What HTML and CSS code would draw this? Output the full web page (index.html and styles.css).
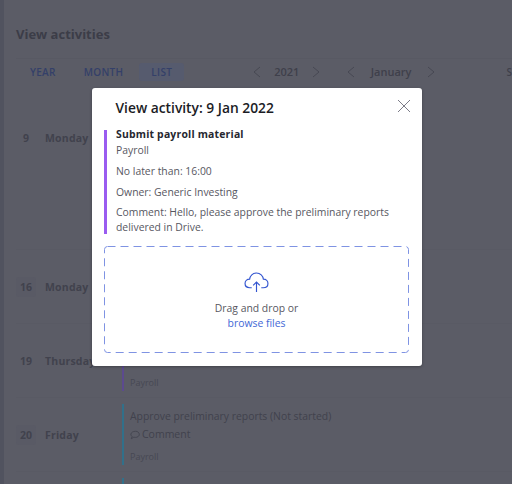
FILE: index.html
```html
<!DOCTYPE html>
<html lang="en">
<head>
    <meta charset="UTF-8">
    <meta name="viewport" content="width=device-width, initial-scale=1.0">
    <title>View activities</title>
    <link rel="stylesheet" href="styles.css">
</head>
<body>
    <div class="page">
        <h1 class="page-title">View activities</h1>

        <div class="toolbar">
            <div class="tabs">
                <span class="tab">YEAR</span>
                <span class="tab">MONTH</span>
                <span class="tab tab-active">LIST</span>
            </div>
            <div class="stepper stepper-year">
                <svg class="chev" viewBox="0 0 8 12"><path d="M7 1 1 6l6 5"/></svg>
                <span>2021</span>
                <svg class="chev" viewBox="0 0 8 12"><path d="M1 1l6 5-6 5"/></svg>
            </div>
            <div class="stepper stepper-month">
                <svg class="chev" viewBox="0 0 8 12"><path d="M7 1 1 6l6 5"/></svg>
                <span>January</span>
                <svg class="chev" viewBox="0 0 8 12"><path d="M1 1l6 5-6 5"/></svg>
            </div>
            <span class="toolbar-end">S</span>
        </div>

        <div class="row row-first">
            <span class="day-num">9</span>
            <span class="day-name">Monday</span>
        </div>
        <div class="row">
            <span class="day-num day-box">16</span>
            <span class="day-name">Monday</span>
        </div>
        <div class="row">
            <span class="day-num">19</span>
            <span class="day-name">Thursday</span>
            <div class="activity purple">
                <span class="act-tag">Payroll</span>
            </div>
        </div>
        <div class="row">
            <span class="day-num day-box">20</span>
            <span class="day-name">Friday</span>
            <div class="activity teal">
                <span class="act-title">Approve preliminary reports (Not started)</span>
                <span class="act-comment">
                    <svg class="comment-icon" viewBox="0 0 12 12"><path d="M6.500 1.500c2.600 0 4.700 1.600 4.700 3.700S9.100 8.900 6.500 8.900c-.7 0-1.300-.1-1.900-.3L1.500 10.500l1-2.800C1.600 7 1 6.100 1 5.200 1 3.100 3.900 1.500 6.500 1.500z"/></svg>
                    Comment
                </span>
                <span class="act-tag">Payroll</span>
            </div>
        </div>
        <div class="row">
            <span class="day-num"></span>
            <span class="day-name"></span>
            <div class="activity teal"></div>
        </div>
    </div>

    <div class="modal">
        <div class="modal-head">
            <h2>View activity: 9 Jan 2022</h2>
            <svg class="close" viewBox="0 0 14 14"><path d="M1 1l12 12M13 1 1 13"/></svg>
        </div>
        <div class="details">
            <div class="details-title">Submit payroll material</div>
            <div class="details-tag">Payroll</div>
            <p>No later than: 16:00</p>
            <p>Owner: Generic Investing</p>
            <p class="details-comment">Comment: Hello, please approve the preliminary reports delivered in Drive.</p>
        </div>
        <div class="dropzone">
            <svg class="dash" width="305" height="107"><rect x=".5" y=".5" width="304" height="106" rx="3"/></svg>
            <svg class="cloud" viewBox="0 0 26 22"><path d="M8 16.500H6C3 16.500 1 14.500 1 12s2-4.500 4.800-4.500C6.200 4 9 1 13 1s6.800 3 7.200 6.500C23 7.500 25 9.500 25 12s-2 4.500-5 4.500h-2"/><path d="M13 21V10.500M9.500 14l3.500-3.500 3.500 3.500"/></svg>
            <div>Drag and drop or</div>
            <a class="browse" href="#">browse files</a>
        </div>
    </div>
</body>
</html>
```

FILE: styles.css
```css
html, body {
    margin: 0;
    padding: 0;
}

body {
    width: 512px;
    height: 484px;
    overflow: hidden;
    position: relative;
    background-color: #5b5c66;
    font-family: "Open Sans", "Noto Sans", sans-serif;
    color: #3d3e49;
}

.page {
    height: 484px;
    overflow: hidden;
    box-sizing: border-box;
    padding-left: 12px;
    border-left: 4px solid #51535f;
}

.page-title {
    margin: 0;
    padding-top: 25px;
    font-size: 13px;
    line-height: 19px;
    font-weight: 700;
    color: #3c3d48;
}

.toolbar {
    display: flex;
    align-items: center;
    height: 25px;
    margin-top: 14px;
    border-top: 1px solid #585963;
    font-size: 10px;
    font-weight: 600;
}

.tabs {
    display: flex;
    padding-left: 2px;
}

.tab {
    padding: 0 12px;
    line-height: 18px;
    letter-spacing: .3px;
    color: #344069;
    margin-right: 4px;
    border-radius: 3px;
}

.tab-active {
    background-color: #565b6e;
}

.stepper {
    display: flex;
    align-items: center;
    gap: 13px;
    font-size: 11px;
    color: #3f404b;
}

.stepper-year {
    margin-left: 65px;
}

.stepper-month {
    margin-left: 27px;
    gap: 15.500px;
}

.toolbar-end {
    margin-left: auto;
    color: #3f404b;
}

.chev {
    width: 8px;
    height: 12px;
    fill: none;
    stroke: #474853;
    stroke-width: 1;
}

.row {
    display: flex;
    align-items: center;
    height: 74px;
    border-bottom: 1px solid #595a64;
    box-sizing: border-box;
    font-size: 10.500px;
    font-weight: 700;
}

.row-first {
    height: 166px;
    align-items: flex-start;
    padding-top: 47px;
}

.day-num {
    width: 20px;
    margin-right: 9px;
    text-align: center;
    color: #41424d;
    flex: none;
}

.day-box {
    background-color: #595a65;
    line-height: 20px;
    border-radius: 3px;
}

.day-name {
    width: 77px;
    flex: none;
    color: #41424d;
    letter-spacing: .2px;
}

.activity {
    align-self: stretch;
    margin: 6px 0;
    padding-left: 6px;
    border-left: 2px solid;
    font-weight: 400;
    font-size: 10.400px;
    color: #41424d;
    display: flex;
    flex-direction: column;
}

.purple {
    border-color: #5c4a8f;
}

.teal {
    border-color: #31708a;
}

.act-title {
    margin-top: 5px;
    line-height: 15px;
}

.act-comment {
    display: flex;
    align-items: center;
    gap: 2px;
    margin-top: 1px;
    line-height: 19px;
    font-size: 10.500px;
}

.comment-icon {
    width: 10px;
    height: 10px;
    fill: none;
    stroke: #41424d;
    stroke-width: 1;
}

.act-tag {
    font-size: 9px;
    line-height: 13px;
    margin-top: auto;
    margin-bottom: 2px;
    color: #474853;
}

.modal {
    position: absolute;
    left: 92px;
    top: 88px;
    width: 330px;
    height: 278px;
    box-sizing: border-box;
    padding: 0 13px 0 12px;
    background: #ffffff;
    border-radius: 3px;
    box-shadow: 0 1px 3px rgba(0, 0, 0, .3);
    color: #57575f;
    font-size: 10.400px;
}

.modal-head {
    display: flex;
    justify-content: space-between;
    height: 42px;
}

.modal-head h2 {
    margin: 10px 0 0 11.500px;
    font-size: 13.800px;
    line-height: 20px;
    font-weight: 600;
    color: #1b1c25;
}

.close {
    width: 14px;
    height: 14px;
    margin: 11px -2px 0 0;
    fill: none;
    stroke: #7c7c88;
    stroke-width: 1;
}

.details {
    display: flow-root;
    height: 104px;
    box-sizing: border-box;
    border-left: 3px solid #9a5cf0;
    padding-left: 9px;
}

.details-title {
    margin-top: -4px;
    font-weight: 700;
    line-height: 16px;
    letter-spacing: .2px;
    color: #26272f;
}

.details-tag {
    line-height: 16px;
    margin-bottom: 6px;
}

.details p {
    margin: 0 0 6px;
    line-height: 15px;
}

.details .details-comment {
    margin-top: -1px;
    margin-bottom: 0;
}

.dropzone {
    position: relative;
    width: 305px;
    height: 107px;
    margin-top: 12px;
    box-sizing: border-box;
    padding-top: 26px;
    text-align: center;
    line-height: 15px;
}

.dash {
    position: absolute;
    left: 0;
    top: 0;
    fill: none;
    stroke: #7f93e3;
    stroke-width: 1;
    stroke-dasharray: 8 5;
}

.cloud {
    display: block;
    width: 25px;
    height: 21px;
    margin: 0 auto 8px;
    fill: none;
    stroke: #3355d0;
    stroke-width: 1.200;
}

.browse {
    color: #4368d6;
    text-decoration: none;
}
```
